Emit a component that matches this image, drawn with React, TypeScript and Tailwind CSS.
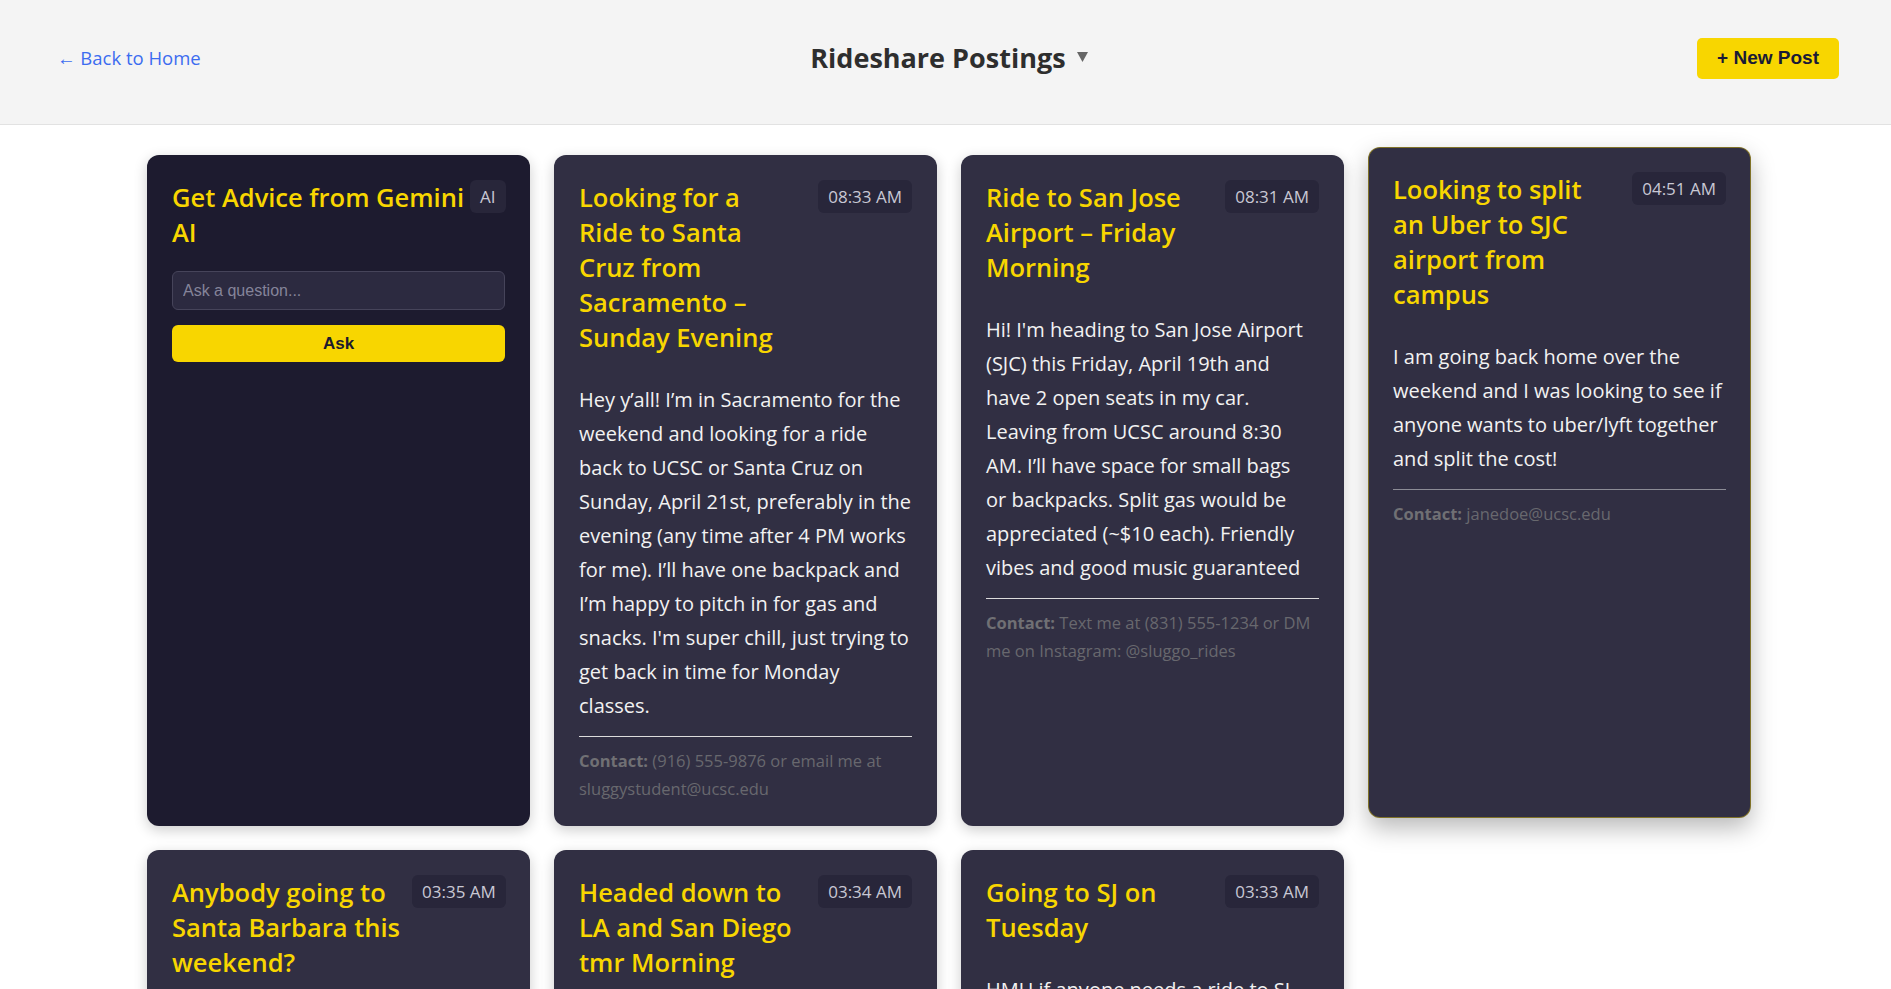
import React from "react";

type Post = {
  id: number;
  title: string[];
  time: string;
  body: string;
  contact: string;
  hovered?: boolean;
};

const posts: Post[] = [
  {
    id: 1,
    title: ["Looking for a", "Ride to Santa", "Cruz from", "Sacramento –", "Sunday Evening"],
    time: "08:33 AM",
    body: "Hey y’all! I’m in Sacramento for the weekend and looking for a ride back to UCSC or Santa Cruz on Sunday, April 21st, preferably in the evening (any time after 4 PM works for me). I’ll have one backpack and I’m happy to pitch in for gas and snacks. I'm super chill, just trying to get back in time for Monday classes.",
    contact: "(916) 555-9876 or email me at sluggystudent@ucsc.edu",
  },
  {
    id: 2,
    title: ["Ride to San Jose", "Airport – Friday", "Morning"],
    time: "08:31 AM",
    body: "Hi! I'm heading to San Jose Airport (SJC) this Friday, April 19th and have 2 open seats in my car. Leaving from UCSC around 8:30 AM. I’ll have space for small bags or\u00a0backpacks. Split gas would be appreciated (~$10 each). Friendly vibes and good music guaranteed",
    contact: "Text me at (831) 555-1234 or DM me on Instagram: @sluggo_rides",
  },
  {
    id: 3,
    title: ["Looking to split", "an Uber to SJC", "airport from", "campus"],
    time: "04:51 AM",
    body: "I am going back home over the weekend and I was looking to see if anyone wants to uber/lyft together and split the cost!",
    contact: "janedoe@ucsc.edu",
    hovered: true,
  },
  {
    id: 4,
    title: ["Anybody going to", "Santa Barbara this", "weekend?"],
    time: "03:35 AM",
    body: "Trying to get down to SB on Friday afternoon and come back Sunday. Happy to split gas and tolls.",
    contact: "sbtrip@ucsc.edu",
  },
  {
    id: 5,
    title: ["Headed down to", "LA and San Diego", "tmr Morning"],
    time: "03:34 AM",
    body: "Leaving early tomorrow morning, have 3 seats open. Can drop off anywhere along the 101 or the 5.",
    contact: "(831) 555-4410",
  },
  {
    id: 6,
    title: ["Going to SJ on", "Tuesday"],
    time: "03:33 AM",
    body: "HMU if anyone needs a ride to SJ on Tuesday morning, leaving around 10 AM.",
    contact: "sjdriver@ucsc.edu",
  },
];

function TimeBadge({ label }: { label: string }) {
  return (
    <span className="shrink-0 h-[33px] px-[10px] flex items-center rounded-md bg-[#28263a] text-[17px] text-[#c8c8d4]">
      {label}
    </span>
  );
}

function GeminiCard() {
  return (
    <div className="rounded-xl bg-[#1d1b2f] border border-transparent px-[24px] pt-[24px] pb-[22px] shadow-[0_4px_14px_rgba(0,0,0,0.2)]">
      <div className="flex items-start justify-between gap-1.5">
        <h2 className="text-[25.5px] leading-[35px] font-semibold text-[#f8d600]">
          <span className="block whitespace-nowrap">Get Advice from Gemini</span>
          <span className="block">AI</span>
        </h2>
        <TimeBadge label="AI" />
      </div>
      <input
        placeholder="Ask a question..."
        className="mt-[21px] w-full h-[39px] rounded-md border border-[#46445a] bg-[#2c2a40] px-[10px] text-[16px] text-white placeholder:text-[#85849a] outline-none font-['Liberation_Sans',Arial,sans-serif]"
      />
      <button className="mt-[15px] w-full h-[37px] rounded-md bg-[#f8d600] text-[17px] font-bold text-[#1b1a2e] font-['Liberation_Sans',Arial,sans-serif]">
        Ask
      </button>
    </div>
  );
}

function PostCard({ post }: { post: Post }) {
  return (
    <div
      className={
        post.hovered
          ? "rounded-xl bg-[#312f43] border border-[#f8d600]/40 px-[24px] pt-[24px] pb-[22px] -translate-y-2 shadow-[0_10px_24px_rgba(0,0,0,0.28)]"
          : "rounded-xl bg-[#312f43] border border-transparent px-[24px] pt-[24px] pb-[22px] shadow-[0_4px_14px_rgba(0,0,0,0.2)]"
      }
    >
      <div className="flex items-start justify-between gap-3">
        <h2 className="text-[25.5px] leading-[35px] font-semibold text-[#f8d600]">
          {post.title.map((line) => (
            <span key={line} className="block whitespace-nowrap">
              {line}
            </span>
          ))}
        </h2>
        <TimeBadge label={post.time} />
      </div>
      <p className="mt-[28px] text-[20px] leading-[34px] text-[#f2f2f2]">{post.body}</p>
      <div
        className={
          post.hovered ? "mt-[13px] border-t border-[#8c8c96]" : "mt-[13px] border-t border-[#dcdcdc]"
        }
      />
      <p className="mt-[10px] text-[16.5px] leading-[28px] text-[#68686e]">
        <span className="font-bold text-[#707074]">Contact:</span> {post.contact}
      </p>
    </div>
  );
}

export default function App() {
  return (
    <div className="min-h-screen bg-white font-['Open_Sans','Noto_Sans',sans-serif]">
      <header className="h-[125px] pb-[8px] flex items-center justify-between pl-[57px] pr-[52px] bg-[#f4f4f4] border-b border-[#e2e2e2]">
        <a href="#" className="text-[18.5px] text-[#3c6cf0]">
          ← Back to Home
        </a>
        <div className="flex items-center gap-[11px]">
          <h1 className="text-[27px] font-bold text-[#2e2e2e]">Rideshare Postings</h1>
          <svg width="11" height="10" viewBox="0 0 11 10" className="-mt-[2px]">
            <polygon points="0,0 11,0 5.5,10" fill="#666" />
          </svg>
        </div>
        <button className="h-[41px] px-[20px] rounded-[5px] bg-[#f8d600] text-[19px] font-bold text-[#1a1a36] font-['Liberation_Sans',Arial,sans-serif]">
          + New Post
        </button>
      </header>

      <main className="grid grid-cols-[repeat(4,383px)] gap-x-[24px] gap-y-[24px] pl-[147px] pt-[30px] pb-10">
        <GeminiCard />
        {posts.map((p) => (
          <PostCard key={p.id} post={p} />
        ))}
      </main>
    </div>
  );
}
